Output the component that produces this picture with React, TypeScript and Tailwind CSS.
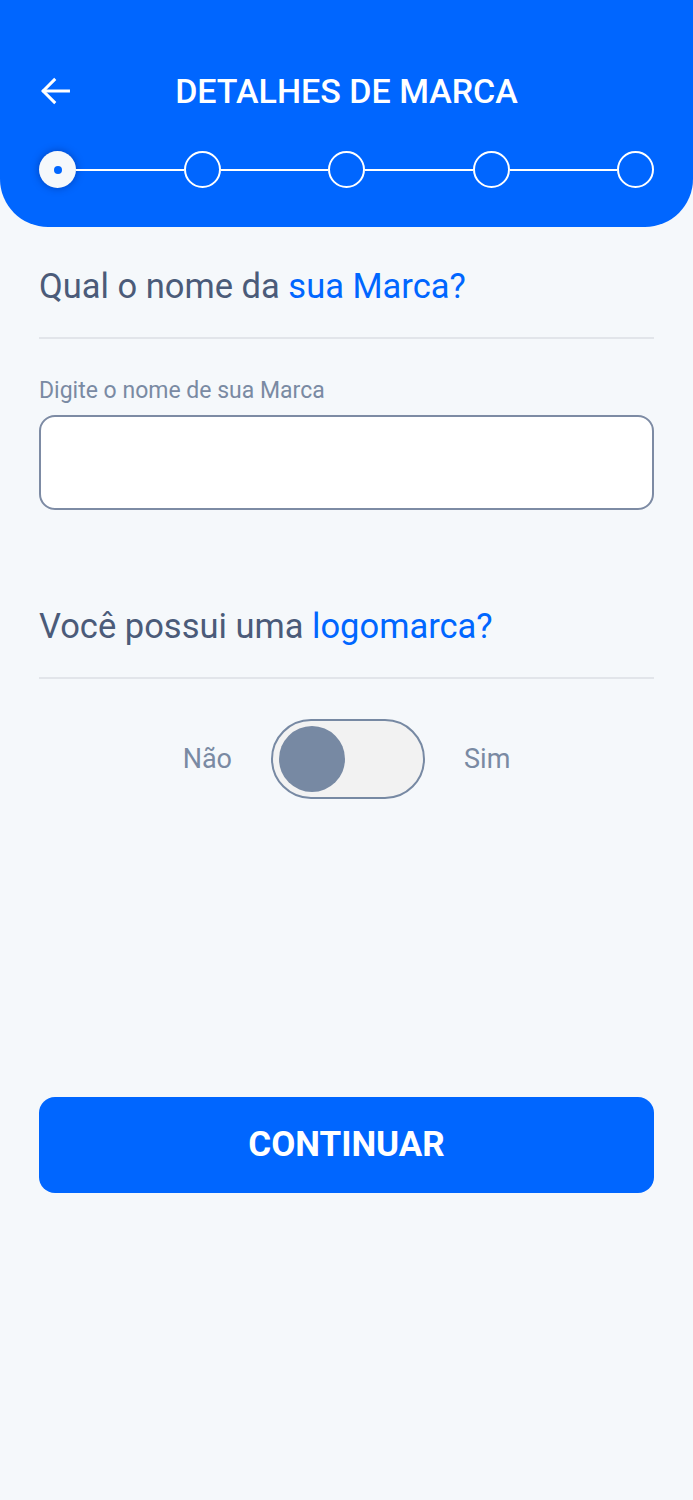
import React, { useState } from 'react';

const Step = ({ active }: { active?: boolean }) =>
  active ? (
    <div className="w-[37px] h-[37px] rounded-full bg-[#f5f8fb] shadow-[0_0_8px_rgba(0,0,60,0.35)] flex items-center justify-center shrink-0">
      <div className="w-[8px] h-[8px] rounded-full bg-[#0066ff]" />
    </div>
  ) : (
    <div className="w-[37px] h-[37px] rounded-full border-2 border-white shrink-0" />
  );

const App = () => {
  const [hasLogo, setHasLogo] = useState(false);
  const [name, setName] = useState('');

  return (
    <div className="min-h-[1500px] bg-[#f5f8fb] font-['Roboto',sans-serif]">
      <header className="bg-[#0066ff] rounded-b-[48px] h-[227px] px-[39px] pt-[70px]">
        <div className="relative flex items-center justify-center h-[42px]">
          <button className="absolute left-[-3px] text-white">
            <svg width="38" height="38" viewBox="0 0 24 24" fill="none" stroke="currentColor" strokeWidth="1.9" strokeLinecap="square">
              <path d="M20.5 12H5" />
              <path d="M11.5 5l-7 7 7 7" />
            </svg>
          </button>
          <h1 className="text-white text-[34px] font-medium leading-[42px]">DETALHES DE MARCA</h1>
        </div>
        <div className="flex items-center mt-[39px]">
          <Step active />
          <div className="flex-1 h-[2px] bg-white" />
          <Step />
          <div className="flex-1 h-[2px] bg-white" />
          <Step />
          <div className="flex-1 h-[2px] bg-white" />
          <Step />
          <div className="flex-1 h-[2px] bg-white" />
          <Step />
        </div>
      </header>

      <main className="px-[39px]">
        <h2 className="text-[34.5px] text-[#4b5b79] mt-[39px] leading-[40px]">
          Qual o nome da <span className="text-[#0066ff]">sua Marca?</span>
        </h2>
        <div className="h-[2px] bg-[#e2e5ea] mt-[31px]" />
        <label className="block text-[23px] text-[#7a8aa3] mt-[38px] leading-[28px]">Digite o nome de sua Marca</label>
        <input
          value={name}
          onChange={(e) => setName(e.target.value)}
          className="block mt-[10px] w-full h-[95px] bg-white border-2 border-[#7d8ba4] rounded-[16px] px-4 text-[24px] outline-none"
        />

        <h2 className="text-[34.5px] text-[#4b5b79] mt-[96px] leading-[40px]">
          Você possui uma <span className="text-[#0066ff]">logomarca?</span>
        </h2>
        <div className="h-[2px] bg-[#e2e5ea] mt-[31px]" />

        <div className="flex items-center justify-center mt-[40px] gap-[39px]">
          <span className="text-[27px] text-[#7a8aa3] leading-[32px]">Não</span>
          <button
            onClick={() => setHasLogo(!hasLogo)}
            className={`w-[154px] h-[80px] rounded-full border-2 border-[#7789a3] bg-[#f2f2f2] flex items-center px-[6px] ${hasLogo ? 'justify-end' : 'justify-start'}`}
          >
            <div className="w-[66px] h-[66px] rounded-full bg-[#7789a3]" />
          </button>
          <span className="text-[27px] text-[#7a8aa3] leading-[32px]">Sim</span>
        </div>

        <button className="block mt-[298px] w-full h-[96px] rounded-[16px] bg-[#0066ff] text-white text-[35px] font-bold">
          CONTINUAR
        </button>
      </main>
    </div>
  );
};

export default App;
